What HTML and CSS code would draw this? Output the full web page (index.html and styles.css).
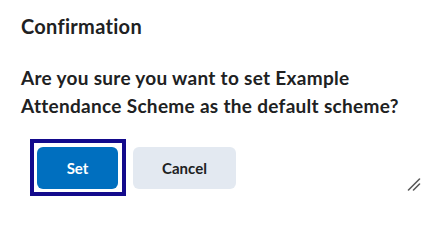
FILE: index.html
```html
<!DOCTYPE html>
<html lang="en">
<head>
<meta charset="utf-8">
<title>Confirmation</title>
<link rel="stylesheet" href="styles.css">
</head>
<body>
<div class="dialog">
  <h2 class="title">Confirmation</h2>
  <p class="message">Are you sure you want to set Example Attendance Scheme as the default scheme?</p>
  <div class="actions">
    <button class="btn btn-primary focused" type="button">Set</button>
    <button class="btn btn-secondary" type="button">Cancel</button>
  </div>
  <svg class="resize" width="14" height="14" viewBox="0 0 14 14" aria-hidden="true">
    <line x1="1.5" y1="13" x2="12.5" y2="2" stroke="#5a5a5a" stroke-width="1.6" stroke-linecap="round"/>
    <line x1="6.5" y1="13" x2="12.5" y2="7" stroke="#5a5a5a" stroke-width="1.6" stroke-linecap="round"/>
  </svg>
</div>
</body>
</html>
```

FILE: styles.css
```css
html, body {
  margin: 0;
  padding: 0;
  background: #ffffff;
}

body {
  width: 443px;
  height: 205px;
  overflow: hidden;
  font-family: Lato, "Noto Sans", sans-serif;
  color: #202122;
}

.dialog {
  position: relative;
  box-sizing: border-box;
  height: 205px;
  padding: 15px 21px 0;
}

.title {
  margin: 0;
  font-size: 20px;
  line-height: 22px;
  font-weight: 700;
  letter-spacing: 0.3px;
}

.message {
  margin: 27px 0 0;
  font-size: 19px;
  line-height: 28px;
  font-weight: 700;
  letter-spacing: 0.3px;
  width: 400px;
}

.actions {
  display: flex;
  gap: 15px;
  margin-top: 27px;
  padding-left: 16px;
}

.btn {
  position: relative;
  box-sizing: border-box;
  height: 42px;
  padding: 0;
  border: none;
  border-radius: 6px;
  font-family: Lato, "Noto Sans", sans-serif;
  font-size: 15px;
  font-weight: 700;
  line-height: 20px;
  text-align: center;
  cursor: pointer;
}

.btn-primary {
  background: #006fbf;
  color: #ffffff;
  width: 81px;
}

.btn-secondary {
  background: #e3e9f1;
  color: #202122;
  width: 103px;
}

.focused {
  outline: none;
}

.focused::after {
  content: "";
  position: absolute;
  top: -8px;
  left: -7px;
  right: -8px;
  bottom: -7px;
  border: 4px solid #130a8c;
  pointer-events: none;
}

.resize {
  position: absolute;
  right: 22px;
  bottom: 14px;
}
```
